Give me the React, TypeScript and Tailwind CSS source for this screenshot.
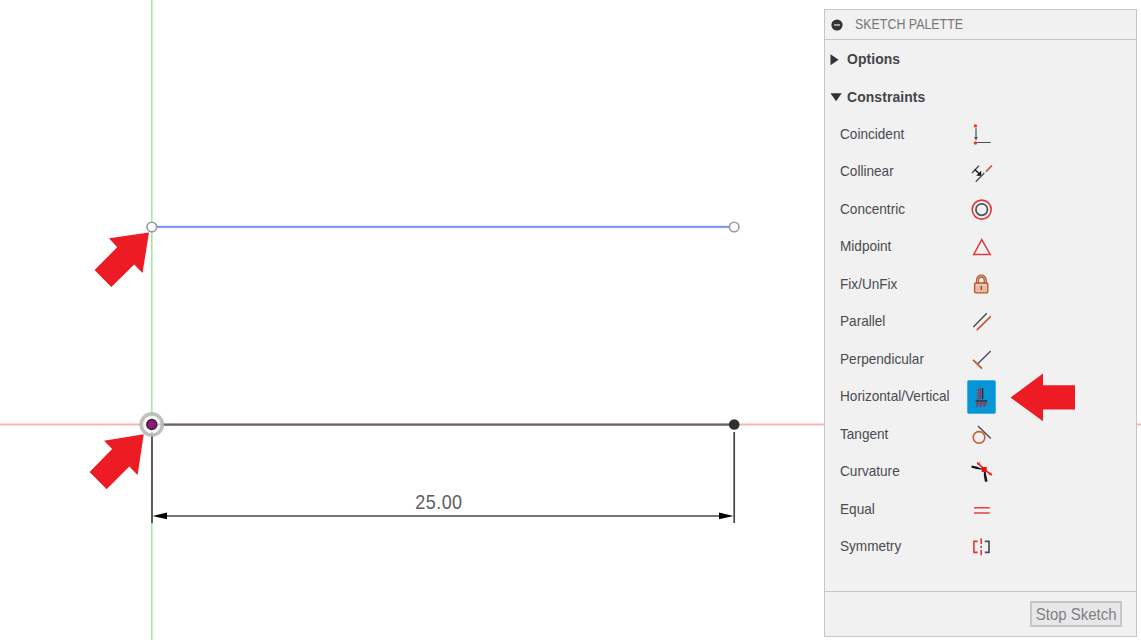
import type { ReactNode } from "react";

const DARK = "#4a5058";
const RED = "#dd3b3b";
const ORANGE = "#c75a35";

type Constraint = { name: string; icon: ReactNode; active?: boolean };

const constraints: Constraint[] = [
  {
    name: "Coincident",
    icon: (
      <>
        <path d="M6 5.2V17M6 19.5H20.7" stroke={DARK} strokeWidth="1.2" />
        <path d="M4 14H8L6 16.8Z" fill={DARK} />
        <circle cx="5.4" cy="2.9" r="1.7" fill="#f03a1c" />
        <circle cx="5.4" cy="20" r="1.7" fill="#f03a1c" />
      </>
    ),
  },
  {
    name: "Collinear",
    icon: (
      <>
        <path d="M2 13L9 5.7M5.7 21.7L14.3 13" stroke={DARK} strokeWidth="1.4" />
        <path d="M4.7 9.5L9 13.5" stroke="#111" strokeWidth="1.3" />
        <path d="M11.2 10.8V15.8H6.2Z" fill="#111" />
        <path d="M15.8 11.9L21.9 5.5" stroke={ORANGE} strokeWidth="1.7" />
      </>
    ),
  },
  {
    name: "Concentric",
    icon: (
      <>
        <circle cx="11.7" cy="11.6" r="9.5" stroke={RED} strokeWidth="1.6" />
        <circle cx="11.7" cy="11.6" r="5.8" stroke={DARK} strokeWidth="1.7" />
      </>
    ),
  },
  {
    name: "Midpoint",
    icon: <path d="M11.7 4.6L3.8 19.4H20.2Z" stroke={RED} strokeWidth="1.5" />,
  },
  {
    name: "Fix/UnFix",
    icon: (
      <>
        <path d="M7.5 10V7C7.5 1.8 15.2 1.8 15.2 7V10" stroke="#b2552c" strokeWidth="3.2" />
        <path d="M7.5 10V7C7.5 1.8 15.2 1.8 15.2 7V10" stroke="#e8b090" strokeWidth="1" />
        <rect x="4.6" y="10" width="13.2" height="9.8" rx="1" fill="#eab99e" stroke="#b2552c" strokeWidth="1.3" />
        <path d="M6 12H16.5" stroke="#f7d9c8" strokeWidth="1" />
        <path d="M11.3 12.8V17" stroke="#8f4425" strokeWidth="1.3" />
      </>
    ),
  },
  {
    name: "Parallel",
    icon: (
      <>
        <path d="M3.3 17L16.8 3.3" stroke={DARK} strokeWidth="1.5" />
        <path d="M6.8 20.2L20.8 6.3" stroke={ORANGE} strokeWidth="1.7" />
      </>
    ),
  },
  {
    name: "Perpendicular",
    icon: (
      <>
        <path d="M7.7 15.8L20.7 3" stroke={DARK} strokeWidth="1.4" />
        <path d="M3 11.8L12 20.6" stroke={ORANGE} strokeWidth="1.8" />
      </>
    ),
  },
  {
    name: "Horizontal/Vertical",
    active: true,
    icon: (
      <>
        <path d="M12.6 3V14.3M5.5 16H17.3" stroke="#203040" strokeWidth="1.4" />
        <path
          d="M11 3.2L7.2 5.6M11 6.2L7.2 8.6M11 9.2L7.2 11.6M11 12.2L7.2 14.4M10.4 3V14"
          stroke="#a62f48"
          strokeWidth="1.5"
        />
        <path
          d="M6 18.2H17M8.6 18L6.4 21.8M12.2 18L10 21.8M15.8 18L13.6 21.8"
          stroke="#a62f48"
          strokeWidth="1.5"
        />
      </>
    ),
  },
  {
    name: "Tangent",
    icon: (
      <>
        <circle cx="9" cy="14.4" r="5.8" stroke={ORANGE} strokeWidth="1.6" />
        <path d="M8 3L20.8 15.5" stroke={DARK} strokeWidth="1.5" />
      </>
    ),
  },
  {
    name: "Curvature",
    icon: (
      <>
        <path d="M1.5 5.6L6.5 6.6L12 8.7V9.8L6.5 9L1.5 7.7Z" fill="#161616" />
        <path d="M13.8 11H15.4L17.6 21.2L15 22L13.9 16Z" fill="#161616" />
        <path d="M7.2 2.6L13 8M15 10.4L22 15" stroke="#e0211e" strokeWidth="1.7" />
        <path d="M7.5 5L10.2 2.2M19.2 15.2L21 12.6" stroke="#e0211e" strokeWidth="1" />
        <rect x="11.7" y="7" width="5" height="5" fill="#f00d0a" />
      </>
    ),
  },
  {
    name: "Equal",
    icon: <path d="M4 9.8H19.8M4 14.9H19.8" stroke="#e04540" strokeWidth="1.5" />,
  },
  {
    name: "Symmetry",
    icon: (
      <>
        <path d="M7.7 6.4H3.9V17.4H7.7" stroke={RED} strokeWidth="1.6" />
        <path d="M11.2 3.3V9M11.2 10.8V13M11.2 14.7V20.3" stroke={RED} strokeWidth="1.6" />
        <path d="M14.8 6.4H19V17.4H14.8" stroke={DARK} strokeWidth="1.7" />
      </>
    ),
  },
];

function SketchCanvas() {
  return (
    <svg className="absolute inset-0" width="1141" height="640" fill="none">
      <path d="M151.8 0V640" stroke="#a2e8a2" strokeWidth="1.6" />
      <path d="M0 424.5H1141" stroke="#f8b5b8" strokeWidth="2" />
      <path d="M152 227H734" stroke="#e4ecff" strokeWidth="3.4" />
      <path d="M152 226.8H734" stroke="#6e92f2" strokeWidth="1.8" />
      <path d="M152 424.6H734" stroke="#666" strokeWidth="2.2" />
      <path d="M152 432V523M734.2 432V523" stroke="#444649" strokeWidth="1.7" />
      <path d="M160 516H728" stroke="#747474" strokeWidth="2" />
      <path d="M152.5 516L167 512.6V519.2Z" fill="#000" />
      <path d="M733.5 516L719 512.6V519.2Z" fill="#000" />
      <circle cx="151.8" cy="227" r="4.8" fill="#fff" stroke="#999" strokeWidth="1.6" />
      <circle cx="734.2" cy="227" r="4.8" fill="#fff" stroke="#999" strokeWidth="1.6" />
      <circle cx="734.2" cy="424.5" r="5.3" fill="#303030" />
      <circle cx="151.8" cy="424.5" r="10.6" fill="#fff" fillOpacity="0.7" stroke="#b4b4b4" strokeOpacity="0.85" strokeWidth="3.6" />
      <circle cx="151.8" cy="424.5" r="4.9" fill="#96147c" stroke="#3c2438" strokeWidth="1.7" />
      <path d="M149 232.5L109 238.3L117.2 247.2L94.6 270L111.3 287L134.2 264.6L142.5 273Z" fill="#ed1c24" />
      <path d="M143.7 434.3L104 440.7L112.1 449L89.6 472L106.6 489.2L129.3 466.4L137.6 475Z" fill="#ed1c24" />
      <text
        transform="translate(415.3 509) scale(0.9 1)"
        fill="#5e5e5e"
        className="font-['Liberation_Sans',sans-serif] text-[20px] tracking-[0.5px]"
      >
        25.00
      </text>
    </svg>
  );
}

function SectionTitle({ open, children }: { open?: boolean; children: string }) {
  return (
    <div className="flex h-[37.5px] items-center pl-[5px] text-[14.2px] font-bold text-[#44444a]">
      <svg width="12" height="12" className="mr-[5px]" fill="#333">
        {open ? <path d="M0.5 2.3H11.7L6.1 10.3Z" /> : <path d="M0.5 0.3L8.6 5.7L0.5 11.2Z" />}
      </svg>
      <span className="origin-left scale-x-[0.98] tracking-[0.1px]">{children}</span>
    </div>
  );
}

export default function App() {
  return (
    <main className="relative flex h-[640px] w-[1141px] justify-end overflow-hidden bg-white pt-[9px] pr-[4px] font-['Liberation_Sans',Arial,sans-serif]">
      <SketchCanvas />
      <aside className="relative flex h-[628px] w-[313px] flex-col border border-[#c6c6c6] bg-[#f1f1f1]">
        <header className="flex h-[30px] shrink-0 items-center border-b border-[#c6c6c6] pl-[6px] text-[14.2px] text-[#77777a]">
          <svg width="12" height="12" className="mr-[12px]">
            <circle cx="6" cy="6" r="5.6" fill="#333" />
            <path d="M3 6H9" stroke="#ddd" strokeWidth="1.3" />
          </svg>
          <span className="origin-left scale-x-[0.875] pt-px whitespace-nowrap">SKETCH PALETTE</span>
        </header>
        <div className="flex-1 pt-px">
          <SectionTitle>Options</SectionTitle>
          <SectionTitle open>Constraints</SectionTitle>
          <ul>
            {constraints.map(({ name, icon, active }) => (
              <li key={name} className="flex h-[37.5px] items-center pl-[15px] text-[14.4px] text-[#4b4b50]">
                <span className="w-[127px] shrink-0 origin-left scale-x-[0.945] whitespace-nowrap">{name}</span>
                <span
                  className={
                    active
                      ? "flex h-[34px] w-[29px] items-center justify-center rounded-[2px] border border-[#3fb2e8] bg-[#0696d7]"
                      : "flex h-[34px] w-[29px] items-center justify-center"
                  }
                >
                  <svg width="24" height="24" fill="none" className="shrink-0">
                    {icon}
                  </svg>
                </span>
              </li>
            ))}
          </ul>
        </div>
        <footer className="flex h-[45px] shrink-0 items-center justify-end border-t border-[#c6c6c6] pr-[14px]">
          <button className="flex h-[26px] w-[92px] items-center justify-center border-2 border-[#c6c6c6] bg-[#e8e8e8] text-[16.4px] whitespace-nowrap text-[#808085]">
            <span className="scale-x-[0.915]">Stop Sketch</span>
          </button>
        </footer>
        <svg className="absolute top-[363px] left-[185px]" width="66" height="49">
          <path d="M0.5 24.5L33 0.5V12.3H65V36.5H33V48.3Z" fill="#ed1c24" />
        </svg>
      </aside>
    </main>
  );
}
